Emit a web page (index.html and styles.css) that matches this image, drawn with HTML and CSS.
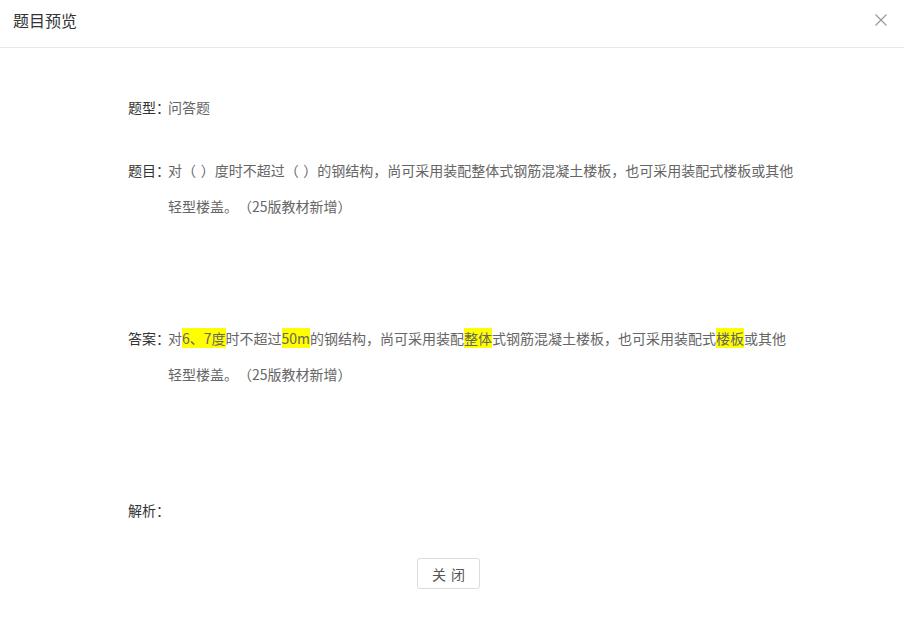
FILE: index.html
```html
<!DOCTYPE html>
<html lang="zh-CN">
<head>
<meta charset="utf-8">
<title>题目预览</title>
<link rel="stylesheet" href="styles.css">
</head>
<body>
<div class="modal">
  <div class="modal-header">
    <span class="modal-title">题目预览</span>
    <button class="modal-close" aria-label="关闭">
      <svg width="12" height="12" viewBox="0 0 12 12"><path d="M0.5 0.5 L11.5 11.5 M11.5 0.5 L0.5 11.5" stroke="#999" stroke-width="1.2" fill="none"/></svg>
    </button>
  </div>
  <div class="modal-body">
    <div class="row row-type">
      <div class="label">题型：</div>
      <div class="content">问答题</div>
    </div>
    <div class="row row-question">
      <div class="label">题目：</div>
      <div class="content">对（ ）度时不超过（ ）的钢结构，尚可采用装配整体式钢筋混凝土楼板，也可采用装配式楼板或其他轻型楼盖。（25版教材新增）</div>
    </div>
    <div class="row row-answer">
      <div class="label">答案：</div>
      <div class="content">对<span class="hl">6、7度</span>时不超过<span class="hl">50m</span>的钢结构，尚可采用装配<span class="hl">整体</span>式钢筋混凝土楼板，也可采用装配式<span class="hl">楼板</span>或其他轻型楼盖。（25版教材新增）</div>
    </div>
    <div class="row row-analysis">
      <div class="label">解析：</div>
      <div class="content"></div>
    </div>
  </div>
  <div class="modal-footer">
    <button class="btn">关 闭</button>
  </div>
</div>
</body>
</html>
```
FILE: styles.css
```css
html, body {
  margin: 0;
  padding: 0;
  background: #fff;
}
body {
  font-family: "Noto Sans CJK SC", "Microsoft YaHei", "Noto Sans", sans-serif;
  color: #333;
  text-spacing-trim: space-all;
  font-feature-settings: "chws" 0, "halt" 0;
}
.modal {
  width: 904px;
  height: 619px;
  display: flex;
  flex-direction: column;
}
.modal-header {
  display: flex;
  align-items: center;
  justify-content: space-between;
  height: 47px;
  box-sizing: content-box;
  padding: 0 17px 0 13px;
  border-bottom: 1px solid #e8e8e8;
}
.modal-title {
  font-size: 16px;
  line-height: 24px;
  color: #333;
  margin-top: -7px;
}
.modal-close {
  border: 0;
  background: none;
  padding: 0;
  width: 12px;
  height: 12px;
  display: flex;
  margin-top: -7px;
  cursor: pointer;
}
.modal-body {
  padding: 41px 0 0 128px;
}
.row {
  display: flex;
  font-size: 14px;
  line-height: 36px;
}
.label {
  width: 40px;
  flex: none;
  white-space: nowrap;
  color: #333;
}
.content {
  width: 628px;
  color: #666;
  word-spacing: 1.5px;
}
.row-question {
  margin-top: 27px;
}
.row-answer {
  margin-top: 96px;
}
.row-analysis {
  margin-top: 100px;
  min-height: 36px;
}
.hl {
  background: #ffff00;
}
.modal-footer {
  display: flex;
  justify-content: center;
  padding: 30px 7px 0 0;
}
.btn {
  width: 63px;
  height: 31px;
  border: 1px solid #dcdcdc;
  border-radius: 3px;
  background: #fff;
  color: #555;
  font-family: inherit;
  font-size: 14px;
  word-spacing: 2px;
  padding: 0;
}
```
